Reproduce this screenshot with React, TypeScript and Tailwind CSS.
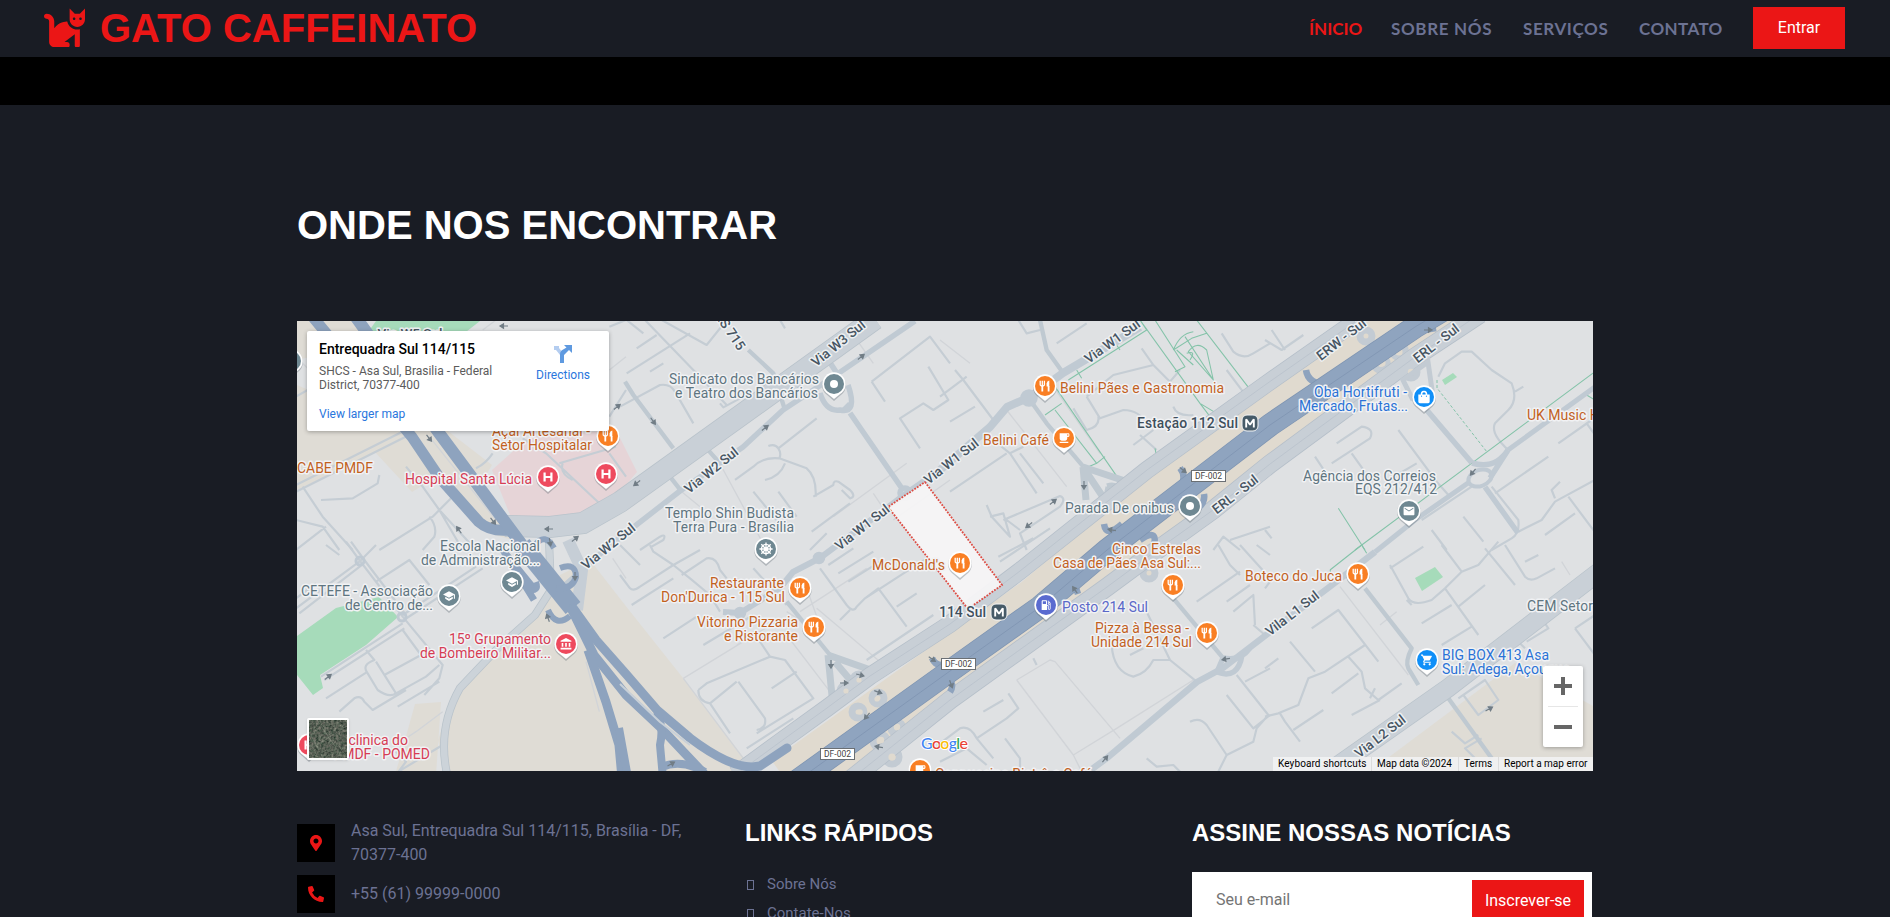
import React from "react";
import { FaCat, FaMapMarkerAlt, FaPhoneAlt, FaShoppingBag } from "react-icons/fa";
import {
  MdAccountBalance,
  MdEmail,
  MdLocalCafe,
  MdLocalGasStation,
  MdSchool,
  MdShoppingCart,
} from "react-icons/md";
import type { IconType } from "react-icons";

/* ---------- map data ---------- */

type Tile = { x: number; y: number; minor: string; thin?: string; green?: string; mid?: string };

// Street geometry is stored per tile, three units to one pixel.
const tiles: Tile[] = [
  {
    x: 296,
    y: 320,
    minor:
      "M0 230L70 190M0 495L340 325M0 515L350 340M20 500L80 590L170 690M75 540L170 535L245 490L250 465M380 500L430 570L540 690M430 570L500 690M0 600L80 620L130 690M0 690L90 620M250 690L410 590L480 520M400 590Q425 620 415 650L380 690M680 355L750 400L910 550M790 430L960 380M800 430Q790 460 830 480M940 20L990 0M940 290L990 210M590 400Q570 430 540 445M380 500L330 440M940 400L990 470",
    thin: "M0 110L60 170M400 350L600 600M600 0L560 30M940 150L990 110",
  },
  {
    x: 620,
    y: 320,
    minor:
      "M20 0L70 40M75 0L225 155L320 255M125 0L260 75L320 0M20 160L210 40M50 85L110 45M90 155L130 130M300 250L310 262L370 230M0 260L120 195Q150 190 165 215L220 310M590 295L475 385Q465 370 445 378M475 385Q485 400 478 415Q430 410 400 440L345 480M478 415L560 445Q590 470 587 530M580 530L640 495Q640 480 655 485L690 510Q710 530 690 535L665 510M495 430Q480 470 435 480M400 515L470 600M475 515L530 590M575 635L690 550M755 185L930 50L990 130M755 185L795 245M925 140L985 240L940 270L910 250L840 295L900 385M95 680L130 660Q140 640 120 650L60 690M480 0L495 25M570 690L620 640",
    thin: "M260 385L310 450L440 690M700 45L760 130M760 520L800 580M640 590L860 430M185 515L240 560M820 600L990 480",
    mid: "M15 185L40 225L160 385M385 90L460 160L495 270M150 470L185 515M260 385L300 430",
  },
  {
    x: 940,
    y: 320,
    minor:
      "M235 0L260 40L300 30M350 70L440 10M0 230L80 170M30 305L105 260M45 150L70 180L160 300M160 360L210 400L250 380M210 400L290 520M240 400L310 490M30 515L200 400M140 555L155 590L210 650L190 580L150 590M190 600L360 528Q380 535 360 560L240 640L260 690M605 85L640 135L690 185L720 150M440 230L520 165L640 135M440 230L480 295L550 270Q600 270 620 315M580 375L640 330M400 265L440 330Q480 320 475 290M600 345L650 390M845 40L880 95Q910 120 940 100L990 70M860 150L920 230M700 260Q710 290 760 285M820 690L850 650L900 690M870 660L990 620M240 630L200 600",
    thin: "M200 270L380 500M340 200L480 400M0 60L90 130M960 380L990 430",
    green:
      "M410 150L425 175M385 180L620 30L600 0M345 200L545 490L830 275L935 215L770 0M315 285L365 250M345 270L470 430L495 410M435 445L470 430M600 0L780 250L830 280M780 250L810 290M645 0L735 140L705 155M700 90L755 55L800 40M700 90Q720 40 760 35M735 50L820 180L745 95Q770 60 800 90L820 180M710 90L760 135M650 410L645 385M520 60L540 90M740 100Q770 90 750 120",
    mid: "M300 0L320 90L370 160M270 240L320 310L430 440",
  },
  {
    x: 1265,
    y: 320,
    minor:
      "M0 60L50 90L115 45M20 30L60 90M215 370L290 320Q330 325 315 355L200 430M150 410L190 470M260 400L310 470M400 330L515 485L555 530M370 480L455 430M470 600L620 500M520 170L540 130L590 95L620 95L680 150L740 190Q760 240 730 270L690 310Q675 340 730 390M750 215L775 200M880 370L980 300M965 310L990 345M690 520L850 410M680 500L760 600Q765 640 740 655L680 690M760 635L830 600L870 545L990 480M910 530L985 630M840 645L930 580M870 535L860 510L885 485M595 590L655 665M500 630L545 690M0 630L20 655M95 340L95 320L130 300",
    green: "M270 690L990 155M220 565L300 690M965 225L990 240",
  },
  {
    x: 296,
    y: 545,
    minor:
      "M0 190L190 50L240 0M10 205L195 62M0 160L60 115M150 -10L190 45L320 215M165 -10L205 45L330 210M320 210L540 65M328 222L560 70M240 110L340 45L400 120M320 215L440 360L430 400L385 450M75 395L320 235M85 405L325 250M90 460L215 380M210 315L235 345Q195 360 215 385L245 435Q280 460 300 445L240 350M265 390L375 330L320 255M300 445L390 395L430 360M305 485L430 410M130 500L175 460Q195 450 205 470L230 495L330 435M290 690L440 600M90 0L130 30M300 690L330 650L300 620",
    thin: "M300 600L360 560L440 500M950 40L990 100M870 350L910 500",
  },
  {
    x: 620,
    y: 545,
    minor:
      "M0 90L30 130Q40 140 60 125L160 60L240 15M35 180L160 100M90 0L100 20L160 60L210 100L270 150L300 200M185 90L260 40Q290 35 300 75L320 100M130 280L230 215M250 300L400 210M400 70L500 180M235 435L260 415L450 335L495 345L580 460L410 565M235 435Q235 470 270 475L350 410M270 475L330 565M355 410L435 520Q440 550 410 555M380 610L520 520M450 335L400 260M455 430L530 380M600 70L680 180Q700 205 710 185L735 160L775 130L860 245M830 185L890 145M660 225L690 195M740 345L940 210M735 160L920 40M625 60L700 10M655 85L760 20M685 110L780 50M0 0L60 60",
    thin: "M190 400L370 290M190 400L370 640M500 270L630 440M370 640L640 480M590 190L780 350M540 200L740 70M350 300L470 230M350 100L440 160M500 200L610 270L560 130",
    mid: "M500 170L630 330",
  },
  {
    x: 940,
    y: 545,
    minor:
      "M175 35L280 -20M180 50L330 -50M110 580L200 520L235 490L205 445M0 595L60 550Q90 540 110 580L160 640M130 500L190 465M195 580L240 640L240 690M515 300Q520 380 580 395Q620 385 640 345L690 345L770 410M515 300L530 280M570 330L610 310M770 170L900 80M860 170L930 120M900 90L870 60L835 0M880 200L940 150L945 240M900 0L990 100M620 640L650 665L700 660L730 690M750 530Q780 515 800 540L860 630L830 690M860 630L940 590L950 550L985 510L890 390M860 450L940 550L990 510M915 410L990 370M940 240L975 270M0 650L80 610L140 660M620 200L690 345M280 340L290 360M950 0L990 30",
    thin: "M230 405L330 345L345 350L540 580M230 405L400 630L530 550L760 405M400 630L430 690",
    mid: "M700 160L850 340",
  },
  {
    x: 1265,
    y: 545,
    minor:
      "M140 250L220 195L340 350M75 290L150 380M0 370L40 340M0 515L40 505L100 480L130 400L180 380L300 300M250 335L290 380L300 430L340 465L410 415M200 445L280 385M260 510L345 465M315 460L330 430M45 505L60 530L105 590M85 555L175 495M375 60L430 160Q445 185 500 165L540 130L590 80L640 60L700 -10M375 70L475 5M530 0L590 80M540 130L640 270M580 185L660 120M470 235L560 180M530 300L620 245M660 10L750 120M720 0L780 95Q795 110 815 100L870 70M780 50L820 30M785 290L850 250L830 220M930 250L990 210M930 250L990 330M760 290L780 310M580 460L660 405L700 465L640 510L595 450M560 560L600 595L640 570M630 640L600 610L650 580M425 165L440 180M0 130L30 90",
    thin: "M225 125L430 390M345 240L395 200M890 50L915 90",
    green: "M195 75L290 0L305 25M195 75L200 90",
    mid: "M300 130L440 310Q420 350 430 370L460 420M550 460L680 640",
  },
];

const ORANGE = "#c2611f";
const SLATE = "#5f7580";
const ROSE = "#d63d54";
const BLUE = "#2b72d6";

type Label = { t: string; x: number; y: number; c: string; end?: boolean; bold?: boolean; w?: number };
const labels: Label[] = [
  { t: "Sindicato dos Bancários", x: 819, y: 384, c: SLATE, end: true, w: 150 },
  { t: "e Teatro dos Bancários", x: 818, y: 398, c: SLATE, end: true, w: 143 },
  { t: "Belini Pães e Gastronomia", x: 1060, y: 393, c: ORANGE, w: 164 },
  { t: "Belini Café", x: 983, y: 445, c: ORANGE, w: 66 },
  { t: "Estação 112 Sul", x: 1137, y: 428, c: "#3f4f5c", bold: true, w: 101 },
  { t: "Parada De onibus", x: 1065, y: 513, c: SLATE, w: 109 },
  { t: "Oba Hortifruti -", x: 1407, y: 397, c: BLUE, end: true, w: 93 },
  { t: "Mercado, Frutas...", x: 1408, y: 411, c: BLUE, end: true, w: 109 },
  { t: "UK Music House", x: 1527, y: 420, c: ORANGE },
  { t: "Agência dos Correios", x: 1436, y: 481, c: SLATE, end: true, w: 133 },
  { t: "EQS 212/412", x: 1437, y: 494, c: SLATE, end: true, w: 82 },
  { t: "Templo Shin Budista", x: 794, y: 518, c: SLATE, end: true, w: 129 },
  { t: "Terra Pura - Brasília", x: 794, y: 532, c: SLATE, end: true, w: 121 },
  { t: "Açaí Artesanal -", x: 590, y: 436, c: ORANGE, end: true, w: 98 },
  { t: "Setor Hospitalar", x: 592, y: 450, c: ORANGE, end: true, w: 100 },
  { t: "Hospital Santa Lúcia", x: 405, y: 484, c: ROSE, w: 127 },
  { t: "CABE PMDF", x: 297, y: 473, c: ORANGE, w: 76 },
  { t: "Escola Nacional", x: 540, y: 551, c: SLATE, end: true, w: 100 },
  { t: "de Administração...", x: 540, y: 565, c: SLATE, end: true, w: 119 },
  { t: "CETEFE - Associação", x: 433, y: 596, c: SLATE, end: true, w: 132 },
  { t: "de Centro de...", x: 433, y: 610, c: SLATE, end: true, w: 88 },
  { t: "15º Grupamento", x: 551, y: 644, c: ROSE, end: true, w: 102 },
  { t: "de Bombeiro Militar...", x: 551, y: 658, c: ROSE, end: true, w: 131 },
  { t: "Policlinica do", x: 408, y: 745, c: ROSE, end: true },
  { t: "PMDF - POMED", x: 430, y: 759, c: ROSE, end: true },
  { t: "Restaurante", x: 784, y: 588, c: ORANGE, end: true, w: 74 },
  { t: "Don'Durica - 115 Sul", x: 785, y: 602, c: ORANGE, end: true, w: 124 },
  { t: "Vitorino Pizzaria", x: 798, y: 627, c: ORANGE, end: true, w: 101 },
  { t: "e Ristorante", x: 798, y: 641, c: ORANGE, end: true, w: 74 },
  { t: "McDonald's", x: 872, y: 570, c: ORANGE, w: 73 },
  { t: "114 Sul", x: 939, y: 617, c: "#3f4f5c", bold: true, w: 47 },
  { t: "Posto 214 Sul", x: 1062, y: 612, c: "#5a68c8", w: 86 },
  { t: "Cinco Estrelas", x: 1201, y: 554, c: ORANGE, end: true, w: 89 },
  { t: "Casa de Pães Asa Sul:...", x: 1201, y: 568, c: ORANGE, end: true, w: 148 },
  { t: "Pizza à Bessa -", x: 1189, y: 633, c: ORANGE, end: true, w: 94 },
  { t: "Unidade 214 Sul", x: 1192, y: 647, c: ORANGE, end: true, w: 101 },
  { t: "Boteco do Juca", x: 1342, y: 581, c: ORANGE, end: true, w: 97 },
  { t: "BIG BOX 413 Asa", x: 1442, y: 660, c: BLUE, w: 107 },
  { t: "Sul: Adega, Açougue", x: 1442, y: 674, c: BLUE },
  { t: "CEM Setor", x: 1527, y: 611, c: SLATE, w: 66 },
  { t: "Cappuccino Bistrô e Café", x: 935, y: 779, c: ORANGE, w: 157 },
];

const streets: [string, number, number, number][] = [
  ["Via W3 Sul", 838, 343, -39],
  ["Via W2 Sul", 711, 470, -39],
  ["Via W2 Sul", 608, 546, -39],
  ["Via W5 Sul", 410, 333, 0],
  ["Via W1 Sul", 862, 527, -38],
  ["Via W1 Sul", 951, 461, -38],
  ["Via W1 Sul", 1112, 341, -36],
  ["ERW - Sul", 1341, 339, -38],
  ["ERL - Sul", 1436, 343, -38],
  ["ERL - Sul", 1235, 494, -38],
  ["Vila L1 Sul", 1292, 613, -38],
  ["Via L2 Sul", 1380, 736, -38],
  ["CRS 715", 728, 327, 56],
];

type Glyph = "food" | "dot" | "H" | "flower" | IconType;
const OR = "#f97f24";
const GR = "#6f8892";
const RD = "#ee4a5e";
const pins: [number, number, string, Glyph][] = [
  [834, 384, GR, "dot"],
  [1045, 386, OR, "food"],
  [1064, 438, OR, MdLocalCafe],
  [1190, 506, GR, "dot"],
  [1424, 397, "#0f8ff8", FaShoppingBag],
  [1409, 511, GR, MdEmail],
  [766, 549, GR, "flower"],
  [608, 436, OR, "food"],
  [548, 477, RD, "H"],
  [606, 474, RD, "H"],
  [291, 361, GR, "dot"],
  [512, 582, GR, MdSchool],
  [449, 596, GR, MdSchool],
  [566, 644, RD, MdAccountBalance],
  [309, 745, RD, "H"],
  [800, 588, OR, "food"],
  [814, 627, OR, "food"],
  [960, 563, OR, "food"],
  [1046, 605, "#5a6bd0", MdLocalGasStation],
  [1173, 585, OR, "food"],
  [1207, 633, OR, "food"],
  [1358, 574, OR, "food"],
  [1427, 660, "#0f8ff8", MdShoppingCart],
  [920, 770, OR, MdLocalCafe],
];

const arrows: [number, number, number][] = [
  [504, 326, 180], [429, 438, 52], [493, 521, 52], [459, 530, 235], [549, 529, 180], [575, 539, -38],
  [617, 407, -38], [653, 421, 55], [765, 428, -38], [861, 357, -38], [637, 483, 142], [550, 542, 80],
  [1084, 485, 90], [1053, 502, -38], [1029, 525, 142], [1183, 470, 38], [1112, 530, 190], [1428, 330, 0],
  [1473, 472, 130], [328, 677, -38], [575, 576, 90], [548, 618, 250], [831, 664, 90], [844, 683, 0],
  [860, 675, 15], [878, 692, 20], [932, 659, 35], [867, 716, 130], [879, 747, 190], [671, 764, -30],
  [951, 684, 70], [1075, 590, 235], [1226, 659, 170], [1105, 759, -50], [1489, 709, -30], [841, 546, 200],
];

const shields: [number, number][] = [
  [1191, 470],
  [941, 658],
  [820, 748],
];

/* ---------- map pieces ---------- */

function PinGlyph({ g }: { g: Glyph }) {
  if (g === "dot") return <circle r={4} fill="#fff" />;
  if (g === "H") return <path d="M-3.4-4.6V4.6M3.4-4.6V4.6M-3.4 0H3.4" stroke="#fff" strokeWidth={2.2} fill="none" />;
  if (g === "food")
    return (
      <g stroke="#fff" fill="none" strokeWidth={1.3}>
        <path d="M-4.8-5.2V-1.6Q-4.8 0-2.7 0Q-.6 0-.6-1.6V-5.2M-2.7-5.2V0" />
        <path d="M-2.7 0V5.4M3.6 0V5.4" strokeWidth={1.8} />
        <path d="M4.3-5.4V.6H1.6V-2.6Q1.8-5 4.3-5.4Z" fill="#fff" stroke="none" />
      </g>
    );
  if (g === "flower")
    return (
      <g stroke="#fff" fill="none" strokeWidth={1.3}>
        <circle r={4.6} />
        <circle r={1.4} />
        <path d="M0-6.6V6.6M-6.6 0H6.6M-4.7-4.7L4.7 4.7M4.7-4.7L-4.7 4.7" />
      </g>
    );
  const Icon = g;
  return <Icon x={-6.5} y={-6.5} size={13} color="#fff" />;
}

function Pin({ x, y, color, g }: { x: number; y: number; color: string; g: Glyph }) {
  return (
    <g transform={`translate(${x} ${y})`}>
      <path d="M0 16L-7.5 9.5A12 12 0 1 1 7.5 9.5Z" fill="#5c6670" opacity={0.35} transform="translate(0 1)" />
      <path d="M0 15L-8 8.6A11.7 11.7 0 1 1 8 8.6Z" fill="#fff" />
      <circle r={10} fill={color} />
      <PinGlyph g={g} />
    </g>
  );
}

const ERW = "M1355 322L1265 385L1147 470L1020 571L950 624L870 676L827 708L780 742L735 775";
const HWY = "M790 786L950 671L1040 607L1107 550L1270 425L1415 327L1450 306";
const ERL = "M850 780L950 700L1107 587L1153 553L1213 510L1270 464L1415 357L1480 314";

function RoadMap() {
  return (
    <svg
      className="block h-full w-full [font-family:Roboto,sans-serif]"
      viewBox="297 321 1296 450"
      preserveAspectRatio="none"
    >
      <rect x={297} y={321} width={1296} height={450} fill="#dfe1e3" />

      {/* land cover */}
      <g fill="#dfdcd5">
        <path d="M549 600L496 655L453 695L438 740L446 775H757L683 678L625 605L590 560L560 575Z" />
        <path d="M415 704L441 702L436 775H395L405 740Z" />
        <path d="M297 385L400 430L436 477L412 492L375 452L297 490Z" />
        <path d="M316 321H359L445 435L530 545L495 535L439 477L412 437Z" />
        <path d="M440 425L492 465L480 485Z" />
        <path d="M1515 663L1595 707V775H1365Z" />
        <path d="M297 321H318L340 350L297 360Z" />
      </g>
      <path d="M376 321H480L462 335H366Z" fill="#a6dbba" />
      <path d="M297 636L336 608L379 597L398 617L366 645L320 675L323 688L313 695L297 675Z" fill="#a6dbba" />
      <path d="M1442 380L1453 373L1457 377L1445 385ZM1415 578L1435 567L1443 577L1422 591Z" fill="#a6dbba" />
      <path d="M492 470L529 437L616 430L637 472L620 492L586 519L530 523L512 520Z" fill="#e6d4d7" />

      {/* local streets */}
      {tiles.map((t) => (
        <g key={`${t.x}-${t.y}`} transform={`translate(${t.x} ${t.y}) scale(.33333)`} fill="none" strokeLinejoin="round">
          {t.thin && <path d={t.thin} stroke="#d1d4d8" strokeWidth={4} />}
          <path d={t.minor} stroke="#c5cdd4" strokeWidth={6.5} />
          {t.mid && <path d={t.mid} stroke="#bfc9d1" strokeWidth={13} />}
          {t.green && <path d={t.green} stroke="#84c3a9" strokeWidth={3.2} />}
        </g>
      ))}
      <path d="M1437 380V388L1487 452" stroke="#84c3a9" fill="none" strokeDasharray="3 2" />

      {/* avenues */}
      <g fill="none" stroke="#c0cad3" strokeWidth={5.5} strokeLinejoin="round">
        <path d="M565 585L608 547L680 491L743 447L783 410L833 377L915 321" />
        <path d="M827 358L840 378M850 413L903 490" />
        <path d="M820 393Q826 412 840 410Q858 414 848 385M843 411L850 404" />
        <path d="M723 612L740 613L780 588L793 572L820 558L907 493L950 463" strokeWidth={6} />
        <path d="M940 470L990 427L1007 407L1030 397L1063 373L1090 357L1140 327" strokeWidth={8} />
        <path d="M1084 775L1107 758L1197 682L1223 668L1270 632L1332 585L1375 552" strokeWidth={6.5} />
        <path d="M1375 552L1415 520L1468 483M1508 450L1595 387" strokeWidth={5} />
        <path d="M1425 408L1472 463M1485 487L1518 533" />
        <ellipse cx={1480} cy={478} rx={12} ry={8} transform="rotate(-20 1480 478)" strokeWidth={4} />
        <path d="M1472 463Q1495 470 1508 450M1490 478L1508 450" />
        <path d="M1223 658L1217 672M1223 658Q1240 662 1250 648M1217 672Q1238 680 1242 655" />
        <circle cx={1029} cy={398} r={6} />
        <circle cx={740} cy={613} r={3.5} />
        <circle cx={819} cy={558} r={3.5} />
        <circle cx={360} cy={561} r={4} strokeWidth={3} />
        <circle cx={402} cy={617} r={4} strokeWidth={3} />
        <circle cx={905} cy={493} r={5} />
      </g>
      <path d="M505 526L550 527L583 523L620 502L875 319" fill="none" stroke="#b9c3cb" strokeWidth={22} />
      <path d="M505 526L550 527L583 523L620 502L875 319" fill="none" stroke="#c9d0d7" strokeWidth={20.5} />
      <path d="M1320 778L1448 688L1600 571" fill="none" stroke="#b9c3cb" strokeWidth={19} />
      <path d="M1320 778L1448 688L1600 571" fill="none" stroke="#c9d0d7" strokeWidth={17.5} />

      {/* central axis */}
      <path d={HWY} fill="none" stroke="#e0dacf" strokeWidth={62} />
      <g fill="none" stroke="#bfc9d1" strokeWidth={7}>
        <path d="M1083 467L1086 500M1083 467L1125 481M1083 467L1103 497M828 655L833 706M828 655L882 674M835 662L852 682" />
        <path d="M1107 486Q1120 482 1115 496Q1103 506 1108 487" strokeWidth={5} />
      </g>
      <g fill="#e0dacf" stroke="#c3cbd3" strokeWidth={7}>
        <circle cx={846} cy={691} r={6} />
        <circle cx={859} cy={680} r={6} />
        <circle cx={878} cy={698} r={6} />
        <circle cx={858} cy={712} r={6} />
        <circle cx={897} cy={728} r={6} />
        <circle cx={880} cy={741} r={7} />
        <circle cx={892} cy={757} r={7} />
        <circle cx={1399} cy={351} r={6.5} />
        <circle cx={1381} cy={364} r={6.5} />
        <circle cx={1411} cy={372} r={6} />
        <circle cx={1366} cy={336} r={6} />
        <circle cx={1149} cy={573} r={6} />
      </g>
      <g fill="none">
        <path d={ERW} stroke="#b5bfc9" strokeWidth={18} />
        <path d={ERL} stroke="#b5bfc9" strokeWidth={19} />
        <path d={ERW} stroke="#c8cfd6" strokeWidth={16.5} />
        <path d={ERL} stroke="#c8cfd6" strokeWidth={17.5} />
        <path d={ERW} stroke="#b9c2cb" strokeWidth={0.8} />
        <path d={ERL} stroke="#b9c2cb" strokeWidth={0.8} />
      </g>
      <g fill="#e0dacf">
        <circle cx={846} cy={691} r={2.6} />
        <circle cx={859} cy={680} r={2.6} />
        <circle cx={877} cy={699} r={2.6} />
        <circle cx={860} cy={712} r={2.8} />
        <circle cx={897} cy={727} r={3.2} />
        <circle cx={881} cy={740} r={3.2} />
        <circle cx={892} cy={757} r={3.6} />
        <circle cx={1399} cy={352} r={3.6} />
        <circle cx={1382} cy={363} r={3.6} />
        <circle cx={1411} cy={372} r={3.2} />
      </g>
      <path d="M1403 380L1428 362L1432 390L1412 398Z" fill="none" stroke="#c3cbd3" strokeWidth={5} />
      <g fill="none" stroke="#8ea3be" strokeWidth={6.5}>
        <path d="M1306 370Q1308 384 1326 384M1180 468Q1188 478 1178 490M1204 494Q1206 505 1192 512M1104 524Q1106 538 1122 524M1140 540Q1158 528 1154 545M1075 585L1078 594M932 658Q936 668 948 664M945 678Q956 682 950 692M1412 332L1436 328" />
      </g>
      <path d={HWY} fill="none" stroke="#7f95b2" strokeWidth={23} />
      <path d={HWY} fill="none" stroke="#8fa4bf" strokeWidth={21.5} />
      <path d={HWY} fill="none" stroke="#8297b4" strokeWidth={1} />

      {/* south-west motorway */}
      <g fill="none" strokeLinejoin="round">
        <path d="M549 540L551 590L535 615L496 650L460 688Q436 730 448 778" stroke="#b9c3cb" strokeWidth={8} />
        <path d="M549 540L551 590L535 615L496 650L460 688Q436 730 448 778" stroke="#ccd3d9" strokeWidth={6.5} />
        <path d="M568 540L582 570L577 610" stroke="#c6ced6" strokeWidth={12} />
        <g stroke="#8ea3be">
          <path d="M312 316L412 437L439 477L479 522Q490 532 510 530L526 550" strokeWidth={11} />
          <path d="M355 316L439 433L526 550" strokeWidth={12} />
          <path d="M500 545L534 600M504 552L535 590" strokeWidth={7} />
          <path d="M522 545L573 608" strokeWidth={19} />
          <path d="M573 608L596 640L626 674L657 710L690 738Q735 772 760 766L787 748" strokeWidth={9} strokeLinecap="round" />
          <path d="M570 606L594 655L626 695L660 727L710 780" strokeWidth={9} />
          <path d="M588 650L606 702L619 745L622 778" strokeWidth={9} />
          <path d="M657 712Q664 728 660 745L663 778M660 768Q680 758 705 772M619 728L628 778" strokeWidth={8} />
          <path d="M528 590Q540 592 536 582M560 568Q576 562 576 577Q572 590 556 588M548 610Q556 628 570 616M535 545Q545 532 554 548" strokeWidth={6} />
        </g>
        <path d="M620 684L660 722L690 745" stroke="#c8d0d8" strokeWidth={2} />
      </g>

      {/* highlighted block */}
      <path
        d="M925 482L1002 585L968 609L888 507Z"
        fill="#f6f4f6"
        fillOpacity={0.95}
        stroke="#dd4c43"
        strokeWidth={1.8}
        strokeDasharray="1.8 1.3"
      />

      {arrows.map(([x, y, r], i) => (
        <path
          key={i}
          d="M-4 0H1M.5-2.2L4 0L.5 2.2Z"
          transform={`translate(${x} ${y}) rotate(${r})`}
          stroke="#717d86"
          strokeWidth={1.2}
          fill="#717d86"
        />
      ))}

      {/* lettering */}
      {streets.map(([t, x, y, r], i) => (
        <text
          key={i}
          transform={`translate(${x} ${y}) rotate(${r})`}
          y={5}
          textAnchor="middle"
          className="text-[13.5px] font-medium"
          fill="#475562"
          stroke="#eef0f2"
          strokeWidth={3}
          paintOrder="stroke"
          strokeLinejoin="round"
        >
          {t}
        </text>
      ))}
      {labels.map((l) => (
        <text
          key={l.t}
          x={l.x}
          y={l.y}
          textAnchor={l.end ? "end" : "start"}
          textLength={l.w}
          className={l.bold ? "text-[14px] font-medium" : "text-[14px]"}
          fill={l.c}
          stroke="#f1f2f4"
          strokeWidth={3}
          paintOrder="stroke"
          strokeLinejoin="round"
        >
          {l.t}
        </text>
      ))}
      {shields.map(([x, y]) => (
        <g key={x}>
          <rect x={x + 0.5} y={y + 0.5} width={34} height={11} fill="#fff" stroke="#6a6f74" />
          <text x={x + 17.5} y={y + 9} textAnchor="middle" className="text-[8.5px]" fill="#444">
            DF-002
          </text>
        </g>
      ))}
      {[[1250, 423], [999, 612]].map(([x, y]) => (
        <g key={x}>
          <rect x={x - 8} y={y - 8} width={16} height={16} rx={5} fill="#475b68" stroke="#f4f5f6" />
          <path
            d={`M${x - 3.8} ${y + 4.5}v-8.300l3.800 5.500l3.800-5.500v8.300`}
            fill="none"
            stroke="#fff"
            strokeWidth={1.9}
            strokeLinejoin="bevel"
          />
        </g>
      ))}
      {pins.map(([x, y, c, g], i) => (
        <Pin key={i} x={x} y={y} color={c} g={g} />
      ))}

      <text
        x={921}
        y={749}
        textLength={47}
        className="text-[16px] font-medium [font-family:Lato,sans-serif]"
        stroke="#fff"
        strokeWidth={2}
        paintOrder="stroke"
      >
        <tspan fill="#4285f4">G</tspan>
        <tspan fill="#ea4335">o</tspan>
        <tspan fill="#fbbc04">o</tspan>
        <tspan fill="#4285f4">g</tspan>
        <tspan fill="#34a853">l</tspan>
        <tspan fill="#ea4335">e</tspan>
      </text>
    </svg>
  );
}

function InfoCard() {
  return (
    <div className="absolute left-[10px] top-[10px] flex h-[100px] w-[302px] justify-between rounded-[2px] bg-white pl-3 pr-[19px] shadow-[0_1px_4px_rgba(0,0,0,0.3)]">
      <div className="flex flex-col pt-[9px]">
        <div className="whitespace-nowrap text-[14px] font-medium leading-[18px] text-black">Entrequadra Sul 114/115</div>
        <div className="mt-[6px] w-[180px] text-[12px] leading-[14px] text-[#5b5b5b]">
          SHCS - Asa Sul, Brasilia - Federal District, 70377-400
        </div>
        <a className="mt-[15px] text-[12px] leading-[15px] text-[#2a76dd]">View larger map</a>
      </div>
      <div className="flex flex-col items-center pt-[13px]">
        <svg width="20" height="20" viewBox="0 0 20 20">
          <path d="M1 2H6V4L10 9V13H7V11L3 6H1Z" fill="#b4cdf0" />
          <path d="M11 1H19V9L16 6L11 11V19H7V10Q7 8 8.500 6.500L13.500 3.500Z" fill="#5f9ae0" />
        </svg>
        <a className="mt-[3px] text-[12px] leading-[16px] text-[#2a76dd]">Directions</a>
      </div>
    </div>
  );
}

function SatelliteThumb() {
  return (
    <div className="absolute bottom-[11px] left-[10px] h-[42px] w-[42px] overflow-hidden rounded-[2px] border-2 border-white shadow">
      <svg width="38" height="38" className="block">
        <filter id="terrain" x="0" y="0" width="100%" height="100%" colorInterpolationFilters="sRGB">
          <feTurbulence type="fractalNoise" baseFrequency="0.4" numOctaves="3" seed="4" />
          <feColorMatrix values="0.5 0.2 0 0 -0.01  0.4 0.25 0 0 0.05  0.4 0.2 0 0 0.03  0 0 0 0 1" />
        </filter>
        <rect width="38" height="38" filter="url(#terrain)" />
        <path d="M0 12L14 38M8 0L34 38M0 30L38 6" stroke="#9aa596" strokeOpacity={0.3} fill="none" />
      </svg>
    </div>
  );
}

function ZoomControl() {
  return (
    <div className="absolute bottom-[24px] right-[10px] flex h-[81px] w-[40px] flex-col items-center rounded-[2px] bg-white shadow-[0_1px_4px_rgba(0,0,0,0.3)]">
      <button className="flex h-10 w-10 items-center justify-center">
        <svg width="18" height="18">
          <path d="M9 0V18M0 9H18" stroke="#666" strokeWidth="4" />
        </svg>
      </button>
      <div className="h-px w-[30px] bg-[#e6e6e6]" />
      <button className="flex h-10 w-10 items-center justify-center">
        <svg width="18" height="18">
          <path d="M0 9H18" stroke="#666" strokeWidth="4" />
        </svg>
      </button>
    </div>
  );
}

function Attribution() {
  return (
    <div className="absolute bottom-0 right-0 flex h-[14px] w-[320px] divide-x divide-[#dcdcdc] whitespace-nowrap bg-[#f3f3f4]/85 text-[10px] leading-[14px] text-black">
      <span className="w-[99px] pl-[5px] tracking-[0.1px]">Keyboard shortcuts</span>
      <span className="w-[87px] pl-[5px]">Map data ©2024</span>
      <span className="w-[40px] pl-[5px]">Terms</span>
      <span className="pl-[5px]">Report a map error</span>
    </div>
  );
}

/* ---------- page ---------- */

function Header() {
  return (
    <header className="flex h-[57px] items-center justify-between bg-[#191c24] pl-[44px] pr-[45px]">
      <div className="flex items-center text-[#eb1616]">
        <FaCat size={41} className="-mt-[4px]" />
        <h1 className="-mt-[2px] ml-[15px] whitespace-nowrap text-[40px] font-bold leading-[48px] [font-family:'Liberation_Sans',Arial,sans-serif]">
          GATO CAFFEINATO
        </h1>
      </div>
      <nav className="flex items-center whitespace-nowrap text-[17px] font-bold text-[#6c7293] [font-family:Lato,sans-serif]">
        <a className="w-[82px] text-[#eb1616]">ÍNICIO</a>
        <a className="w-[132px] tracking-[0.65px]">SOBRE NÓS</a>
        <a className="w-[116px] tracking-[0.6px]">SERVIÇOS</a>
        <a className="w-[114px] tracking-[0.4px]">CONTATO</a>
        <button className="mb-[1px] flex h-[42px] w-[92px] items-center justify-center bg-[#eb1616] text-[16px] font-normal text-white [font-family:Roboto,sans-serif]">
          Entrar
        </button>
      </nav>
    </header>
  );
}

function Footer() {
  return (
    <footer className="grid grid-cols-3 text-[16px] text-[#6c7293]">
      <div className="flex w-[400px] flex-col gap-[13px] pt-[24px]">
        <div className="flex gap-4">
          <div className="flex h-[38px] w-[38px] shrink-0 items-center justify-center bg-black text-[#eb1616]">
            <FaMapMarkerAlt size={16} />
          </div>
          <p className="-mt-[5px] h-[43px] leading-[24px]">
            Asa Sul, Entrequadra Sul 114/115, Brasília - DF, 70377-400
          </p>
        </div>
        <div className="flex items-center gap-4">
          <div className="flex h-[38px] w-[38px] items-center justify-center bg-black text-[#eb1616]">
            <FaPhoneAlt size={16} />
          </div>
          <p>+55 (61) 99999-0000</p>
        </div>
      </div>
      <div className="pl-[16px] pt-[18px]">
        <h2 className="text-[24px] font-bold leading-[29px] text-white [font-family:'Liberation_Sans',Arial,sans-serif]">
          LINKS RÁPIDOS
        </h2>
        <ul className="mt-[26px] text-[15px] leading-[23px]">
          {["Sobre Nós", "Contate-Nos"].map((t) => (
            <li key={t} className="mb-[6px] flex items-center">
              <span className="ml-[2px] mr-[13px] h-[10px] w-[7px] border border-[#6c7293]" />
              {t}
            </li>
          ))}
        </ul>
      </div>
      <div className="pl-[31px] pt-[18px]">
        <h2 className="whitespace-nowrap text-[24px] font-bold leading-[29px] text-white [font-family:'Liberation_Sans',Arial,sans-serif]">
          ASSINE NOSSAS NOTÍCIAS
        </h2>
        <div className="mt-[25px] flex h-[58px] w-[400px] items-start justify-between bg-white pl-6 pr-2 pt-2">
          <span className="pt-[8px] leading-[24px] text-[#757575]">Seu e-mail</span>
          <button className="flex h-[42px] w-[112px] items-center justify-center bg-[#eb1616] text-white">
            Inscrever-se
          </button>
        </div>
      </div>
    </footer>
  );
}

export default function App() {
  return (
    <div className="h-[917px] w-full overflow-hidden bg-[#191c24] [font-family:Roboto,sans-serif]">
      <Header />
      <div className="h-[48px] bg-black" />
      <main className="mx-auto w-[1296px]">
        <h2 className="pt-[96px] text-[40px] font-bold leading-[48px] text-white [font-family:'Liberation_Sans',Arial,sans-serif]">
          ONDE NOS ENCONTRAR
        </h2>
        <section className="relative mt-[72px] h-[450px] w-[1296px] overflow-hidden">
          <RoadMap />
          <InfoCard />
          <SatelliteThumb />
          <ZoomControl />
          <Attribution />
        </section>
        <div className="pt-[29px]">
          <Footer />
        </div>
      </main>
    </div>
  );
}
